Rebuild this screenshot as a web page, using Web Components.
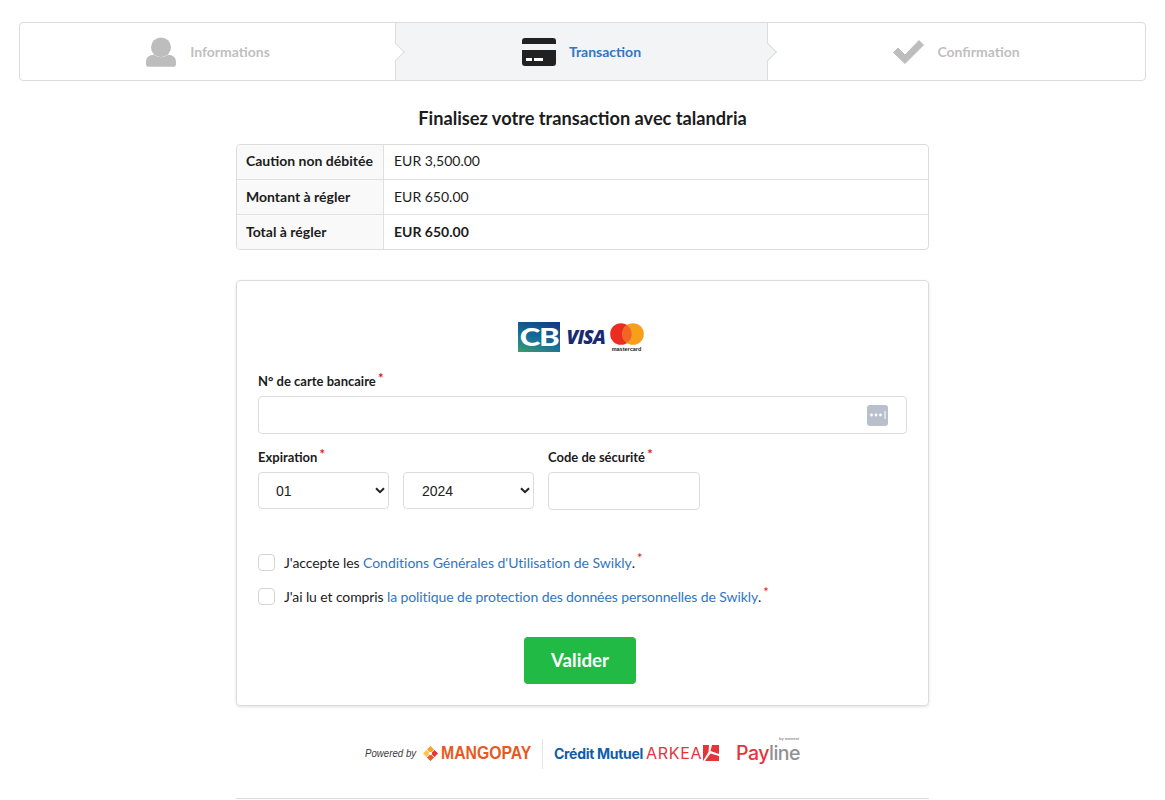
<!DOCTYPE html>
<html lang="fr">
<head>
<meta charset="utf-8">
<title>Transaction</title>
<style>
    html, body { margin: 0; padding: 0; background: #fff; }
    body { font-family: Lato, "Liberation Sans", sans-serif; color: rgba(0,0,0,.87); font-size: 14px; }
</style>
</head>
<body>

<pay-page>
    <step-bar>
        <step-item label="Informations" icon="user"></step-item>
        <step-item label="Transaction" icon="card" active></step-item>
        <step-item label="Confirmation" icon="check" last></step-item>
    </step-bar>

    <pay-title>Finalisez votre transaction avec talandria</pay-title>

    <summary-table>
        <summary-row label="Caution non débitée">EUR 3,500.00</summary-row>
        <summary-row label="Montant à régler">EUR 650.00</summary-row>
        <summary-row label="Total à régler" strong>EUR 650.00</summary-row>
    </summary-table>

    <pay-card>
        <card-logos></card-logos>

        <form-label style="margin-top:20px">N° de carte bancaire</form-label>
        <card-number></card-number>

        <expiry-row></expiry-row>

        <check-row style="margin-top:44px;letter-spacing:-.08px">J'accepte les <a slot="link" style="letter-spacing:-.02px">Conditions Générales d'Utilisation de Swikly</a></check-row>
        <check-row style="margin-top:16px;letter-spacing:-.11px">J'ai lu et compris <a slot="link" style="letter-spacing:-.1px">la politique de protection des données personnelles de Swikly</a></check-row>

        <submit-button>Valider</submit-button>
    </pay-card>

    <partner-strip></partner-strip>
    <next-box></next-box>
</pay-page>

<script>
    const ICONS = {
        user: `<svg width="32" height="30" viewBox="0 0 32 32" preserveAspectRatio="none"><ellipse cx="16" cy="11" rx="10" ry="10.6" fill="#bdbdbd"/><path d="M1 27c0-5 3-8 8-8 2 1.800 4.500 2.600 7 2.600s5-.8 7-2.600c5 0 8 3 8 8v2c0 1.600-1.200 2.800-3 2.800H4c-1.800 0-3-1.200-3-2.800z" fill="#bdbdbd"/></svg>`,
        card: `<svg width="34" height="28" viewBox="0 0 34 28"><path d="M3 0h28a3 3 0 0 1 3 3v3H0V3a3 3 0 0 1 3-3z" fill="#212121"/><path d="M0 12h34v13a3 3 0 0 1-3 3H3a3 3 0 0 1-3-3z" fill="#212121"/><rect x="4" y="20" width="6" height="3" fill="#fff"/><rect x="12" y="20" width="9" height="3" fill="#fff"/></svg>`,
        check: `<svg width="31" height="24" viewBox="0 0 31 24"><path d="M0.500 12.500 5 8l7 7L26 0.500 30.500 5 12 23.500z" fill="#bdbdbd" stroke="#bdbdbd" stroke-linejoin="round"/></svg>`
    };

    class PayPage extends HTMLElement {
        constructor() {
            super();
            this.attachShadow({mode: 'open'});
            this.shadowRoot.innerHTML = `
                <style>
                    :host { display: block; padding: 22px 19px 0; }
                </style>
                <slot></slot>`;
        }
    }

    class StepBar extends HTMLElement {
        constructor() {
            super();
            this.attachShadow({mode: 'open'});
            this.shadowRoot.innerHTML = `
                <style>
                    :host {
                        display: grid;
                        grid-template-columns: 375px 373px 1fr;
                        height: 59px;
                        box-sizing: border-box;
                        border: 1px solid #dcdcdd;
                        border-radius: 4px;
                    }
                </style>
                <slot></slot>`;
        }
    }

    class StepItem extends HTMLElement {
        constructor() {
            super();
            this.attachShadow({mode: 'open'});
        }

        connectedCallback() {
            const label = this.getAttribute('label');
            const icon = ICONS[this.getAttribute('icon')];
            this.shadowRoot.innerHTML = `
                <style>
                    :host {
                        display: flex;
                        position: relative;
                        align-items: center;
                        justify-content: center;
                        gap: 13px;
                        font-size: 14px;
                        font-weight: 700;
                        color: #bfbfbf;
                    }
                    :host([active]) { background: #f3f4f5; color: #2f76c5; border-right: 1px solid #dcdcdd; border-left: 1px solid #dcdcdd; }
                    :host(:first-child) { border-radius: 3px 0 0 3px; }
                    svg { display: block; }
                    .tip {
                        position: absolute;
                        top: 50%;
                        right: -7px;
                        width: 14px;
                        height: 14px;
                        box-sizing: border-box;
                        background: inherit;
                        border-top: 1px solid #dcdcdd;
                        border-right: 1px solid #dcdcdd;
                        transform: translateY(-50%) rotate(45deg);
                        z-index: 2;
                    }
                    :host(:not([active])) .tip { background: #fff; }
                    :host([last]) .tip { display: none; }
                </style>
                ${icon}
                <span>${label}</span>
                <i class="tip"></i>`;
        }
    }

    class PayTitle extends HTMLElement {
        constructor() {
            super();
            this.attachShadow({mode: 'open'});
            this.shadowRoot.innerHTML = `
                <style>
                    :host {
                        display: block;
                        margin-top: 26px;
                        text-align: center;
                        font-size: 18.2px;
                        line-height: 22px;
                        font-weight: 700;
                        color: #1c1c1c;
                    }
                </style>
                <slot></slot>`;
        }
    }

    class SummaryTable extends HTMLElement {
        constructor() {
            super();
            this.attachShadow({mode: 'open'});
            this.shadowRoot.innerHTML = `
                <style>
                    :host {
                        display: block;
                        width: 693px;
                        box-sizing: border-box;
                        margin: 15px auto 0;
                        border: 1px solid #dcdcdd;
                        border-radius: 4px;
                        overflow: hidden;
                    }
                </style>
                <slot></slot>`;
        }
    }

    class SummaryRow extends HTMLElement {
        constructor() {
            super();
            this.attachShadow({mode: 'open'});
        }

        connectedCallback() {
            this.shadowRoot.innerHTML = `
                <style>
                    :host {
                        display: grid;
                        grid-template-columns: 147px 1fr;
                        height: 35px;
                        font-size: 14px;
                        color: #1c1c1c;
                    }
                    :host(:first-child) { height: 34px; }
                    :host(:not(:first-child)) .th, :host(:not(:first-child)) .td { border-top: 1px solid #e0e0e0; }
                    .th, .td { display: flex; align-items: center; box-sizing: border-box; padding-bottom: 2px; }
                    :host(:first-child) .th, :host(:first-child) .td { padding-bottom: 4px; }
                    .th { padding-left: 9px; font-weight: 700; background: #f9f9f9; border-right: 1px solid #e0e0e0; }
                    .td { padding-left: 10px; }
                    :host([strong]) .td { font-weight: 700; }
                </style>
                <div class="th">${this.getAttribute('label')}</div>
                <div class="td"><slot></slot></div>`;
        }
    }

    class PayCard extends HTMLElement {
        constructor() {
            super();
            this.attachShadow({mode: 'open'});
            this.shadowRoot.innerHTML = `
                <style>
                    :host {
                        display: block;
                        width: 693px;
                        height: 426px;
                        box-sizing: border-box;
                        margin: 30px auto 0;
                        padding: 41px 21px 0;
                        border: 1px solid #dcdcdd;
                        border-radius: 4px;
                        box-shadow: 0 1px 3px rgba(0,0,0,.12);
                    }
                </style>
                <slot></slot>`;
        }
    }

    class CardLogos extends HTMLElement {
        constructor() {
            super();
            this.attachShadow({mode: 'open'});
            this.shadowRoot.innerHTML = `
                <style>
                    :host { display: flex; justify-content: center; align-items: flex-start; height: 30px; padding-right: 4px; }
                    .cb {
                        width: 42px;
                        height: 30px;
                        overflow: hidden;
                        background: linear-gradient(20deg, #3f9d68 0%, #14709a 42%, #12387e 100%);
                        color: #fff;
                        font: 900 24px/30px Lato, sans-serif;
                        letter-spacing: -1px;
                        text-align: center;
                    }
                    .cb span { display: block; transform: scaleX(1.3); }
                    .visa {
                        margin-left: 7px;
                        width: 40px;
                        color: #1a2a72;
                        font: italic 800 19px/30px "Open Sans", "Liberation Sans", sans-serif;
                        letter-spacing: -.8px;
                    }
                    .mc { margin-left: 3px; width: 34px; padding-top: 1px; }
                    .mc svg { display: block; }
                    .mc span { display: block; font: 700 5.500px/6px "Liberation Sans", sans-serif; color: #222; text-align: center; margin-top: 1px; }
                </style>
                <div class="cb"><span>CB</span></div>
                <div class="visa">VISA</div>
                <div class="mc">
                    <svg width="34" height="22" viewBox="0 0 34 22"><circle cx="11" cy="11" r="10.800" fill="#eb2d1f"/><circle cx="23" cy="11" r="10.800" fill="#f79e1b"/><path d="M17 2.100a10.800 10.800 0 0 1 0 17.800 10.800 10.800 0 0 1 0-17.800z" fill="#f26522"/></svg>
                    <span>mastercard</span>
                </div>`;
        }
    }

    class FormLabel extends HTMLElement {
        constructor() {
            super();
            this.attachShadow({mode: 'open'});
            this.shadowRoot.innerHTML = `
                <style>
                    :host { display: block; font-size: 13px; line-height: 18px; font-weight: 700; color: #1c1c1c; }
                    sup { color: #e4131f; font-size: 13px; line-height: 0; position: relative; top: 2px; margin-left: -1px; }
                </style>
                <slot></slot> <sup>*</sup>`;
        }
    }

    class CardNumber extends HTMLElement {
        constructor() {
            super();
            this.attachShadow({mode: 'open'});
            this.shadowRoot.innerHTML = `
                <style>
                    :host { display: block; position: relative; margin-top: 6px; height: 38px; }
                    input { display: block; width: 100%; height: 38px; box-sizing: border-box; border: 1px solid #dcdcdd; border-radius: 4px; background: #fff; }
                    svg { position: absolute; right: 19px; top: 9px; }
                </style>
                <input type="text" aria-label="N° de carte bancaire">
                <svg width="21" height="21" viewBox="0 0 21 21"><rect width="21" height="21" rx="3" fill="#b9c0cc"/><circle cx="4.500" cy="10" r="1.400" fill="#fff"/><circle cx="9" cy="10" r="1.400" fill="#fff"/><circle cx="13.500" cy="10" r="1.400" fill="#fff"/><rect x="17.500" y="6" width="1" height="8" fill="#fff"/></svg>`;
        }
    }

    class ExpiryRow extends HTMLElement {
        constructor() {
            super();
            this.attachShadow({mode: 'open'});
            this.shadowRoot.innerHTML = `
                <style>
                    :host {
                        display: grid;
                        grid-template-columns: 131px 131px 152px;
                        column-gap: 14px;
                        margin-top: 14px;
                    }
                    .exp { grid-column: span 2; }
                    .selects { display: flex; gap: 14px; margin-top: 6px; }
                    .pick { position: relative; width: 131px; height: 37px; }
                    select {
                        display: block;
                        appearance: none;
                        width: 100%;
                        height: 37px;
                        box-sizing: border-box;
                        padding: 0 0 0 18px;
                        border: 1px solid #dcdcdd;
                        border-radius: 4px;
                        background: #fff;
                        font: 14px "Liberation Sans", sans-serif;
                        color: #222;
                    }
                    .pick:first-child select { padding-left: 17px; }
                    .pick svg { position: absolute; right: 4px; top: 15px; pointer-events: none; }
                    input { display: block; margin-top: 6px; width: 152px; height: 38px; box-sizing: border-box; border: 1px solid #dcdcdd; border-radius: 4px; }
                </style>
                <div class="exp">
                    <form-label>Expiration</form-label>
                    <div class="selects">
                        <div class="pick"><select aria-label="Mois"><option>01</option></select><svg width="10" height="7" viewBox="0 0 10 7"><path d="M1 1.200 5 5.200 9 1.200" fill="none" stroke="#222" stroke-width="2"/></svg></div>
                        <div class="pick"><select aria-label="Année"><option>2024</option></select><svg width="10" height="7" viewBox="0 0 10 7"><path d="M1 1.200 5 5.200 9 1.200" fill="none" stroke="#222" stroke-width="2"/></svg></div>
                    </div>
                </div>
                <div>
                    <form-label>Code de sécurité</form-label>
                    <input type="text" aria-label="Code de sécurité">
                </div>`;
        }
    }

    class CheckRow extends HTMLElement {
        constructor() {
            super();
            this.attachShadow({mode: 'open'});
            this.shadowRoot.innerHTML = `
                <style>
                    :host { display: flex; align-items: flex-start; gap: 9px; height: 18px; font-size: 14px; line-height: 18px; color: #1c1c1c; }
                    .box { flex: none; width: 17px; height: 17px; box-sizing: border-box; border: 1px solid #d4d4d5; border-radius: 4px; background: #fff; }
                    .link { color: #2f76c5; }
                    sup { color: #e4131f; font-size: 13px; line-height: 0; position: relative; top: 1px; margin-left: 2px; }
                    .text { white-space: pre-wrap; }
                </style>
                <span class="box"></span>
                <span class="text"><slot></slot><span class="link"><slot name="link"></slot></span>.<sup>*</sup></span>`;
        }
    }

    class SubmitButton extends HTMLElement {
        constructor() {
            super();
            this.attachShadow({mode: 'open'});
            this.shadowRoot.innerHTML = `
                <style>
                    :host { display: block; width: 112px; margin: 31px 0 0 266px; }
                    button {
                        display: block;
                        width: 112px;
                        height: 47px;
                        border: 0;
                        border-radius: 4px;
                        background: #21ba45;
                        color: #fff;
                        font: 700 18.7px/44px Lato, sans-serif;
                        padding: 0 0 2px;
                    }
                </style>
                <button type="button"><slot></slot></button>`;
        }
    }

    class PartnerStrip extends HTMLElement {
        constructor() {
            super();
            this.attachShadow({mode: 'open'});
            this.shadowRoot.innerHTML = `
                <style>
                    :host { display: flex; justify-content: center; align-items: center; height: 30px; margin-top: 33px; white-space: nowrap; }
                    span { padding-bottom: 2px; }
                    .powered { font: italic 11px "Liberation Sans", sans-serif; color: #3b3b3b; width: 51px; transform: scaleX(.88); transform-origin: 0 50%; }
                    .mango { margin: 0 0 2px 7px; display: block; }
                    .mangopay { margin-left: 3px; font: 700 19px "Liberation Sans", sans-serif; color: #e8591f; width: 90px; transform: scaleX(.83); transform-origin: 0 50%; }
                    .divider { width: 1px; height: 30px; padding: 0; background: #e4e4e4; margin: 0 11px; }
                    .cm { font: 700 14px Inter, "Liberation Sans", sans-serif; color: #0f5da8; letter-spacing: -.3px; width: 92px; }
                    .arkea { font: 400 16px Inter, "Liberation Sans", sans-serif; color: #e5343c; width: 57px; letter-spacing: .7px; }
                    .ark { display: block; margin-bottom: 2px; }
                    .payline { position: relative; margin-left: 17px; font: 500 19.5px Inter, "Liberation Sans", sans-serif; letter-spacing: -.5px; color: #e5343c; width: 64px; }
                    .payline b { font-weight: 500; color: #8e9193; }
                    .payline i { position: absolute; right: 1px; top: -5px; padding: 0; font: 700 4px/5px "Liberation Sans", sans-serif; letter-spacing: 0; color: #8e9193; }
                </style>
                <span class="powered">Powered by</span>
                <svg class="mango" width="15" height="15" viewBox="0 0 15 15">
                    <rect x="5" y="1" width="5" height="5" transform="rotate(45 7.500 3.500)" fill="#f6a623"/>
                    <rect x="1" y="5" width="5" height="5" transform="rotate(45 3.500 7.500)" fill="#f9c74f"/>
                    <rect x="9" y="5" width="5" height="5" transform="rotate(45 11.500 7.500)" fill="#e8352e"/>
                    <rect x="5" y="9" width="5" height="5" transform="rotate(45 7.500 11.500)" fill="#ea5b2a"/>
                    <rect x="6.300" y="6.300" width="2.400" height="2.400" transform="rotate(45 7.500 7.500)" fill="#fff"/>
                </svg>
                <span class="mangopay">MANGOPAY</span>
                <span class="divider"></span>
                <span class="cm">Crédit Mutuel</span>
                <span class="arkea">ARKEA</span>
                <svg class="ark" width="16" height="16" viewBox="0 0 16 16"><rect width="16" height="16" fill="#e5343c"/><path d="M6 0h3L7.500 6 16 9v2L7.500 8.500 2 16H0l5.500-9z" fill="#fff"/></svg>
                <span class="payline">Pay<b>line</b><i>by monext</i></span>`;
        }
    }

    class NextBox extends HTMLElement {
        constructor() {
            super();
            this.attachShadow({mode: 'open'});
            this.shadowRoot.innerHTML = `
                <style>
                    :host { display: block; width: 693px; height: 2px; box-sizing: border-box; margin: 29px auto 0; border-top: 1px solid #dcdcdd; }
                </style>`;
        }
    }

    window.customElements.define('form-label', FormLabel);
    window.customElements.define('pay-page', PayPage);
    window.customElements.define('step-bar', StepBar);
    window.customElements.define('step-item', StepItem);
    window.customElements.define('pay-title', PayTitle);
    window.customElements.define('summary-table', SummaryTable);
    window.customElements.define('summary-row', SummaryRow);
    window.customElements.define('pay-card', PayCard);
    window.customElements.define('card-logos', CardLogos);
    window.customElements.define('card-number', CardNumber);
    window.customElements.define('expiry-row', ExpiryRow);
    window.customElements.define('check-row', CheckRow);
    window.customElements.define('submit-button', SubmitButton);
    window.customElements.define('partner-strip', PartnerStrip);
    window.customElements.define('next-box', NextBox);
</script>
</body>
</html>
